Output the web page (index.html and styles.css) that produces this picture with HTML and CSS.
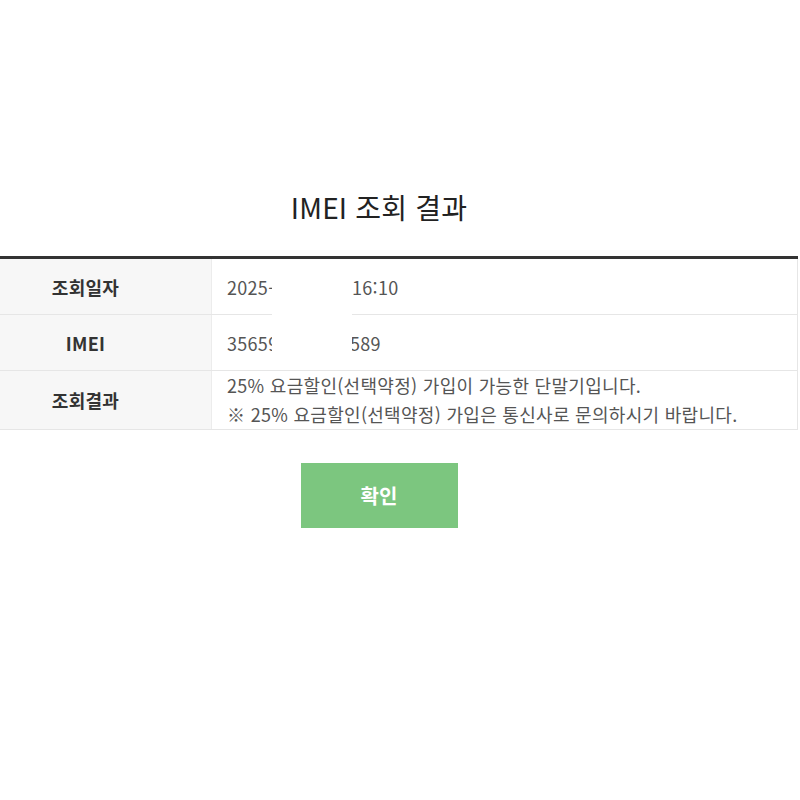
FILE: index.html
```html
<!DOCTYPE html>
<html lang="ko">
<head>
<meta charset="utf-8">
<title>IMEI 조회 결과</title>
<link rel="stylesheet" href="styles.css">
</head>
<body>
<div class="page">
  <h1 class="title">IMEI 조회 결과</h1>
  <div class="table-wrap">
    <table class="result">
      <tbody>
        <tr>
          <th>조회일자</th>
          <td><span class="part part-date">2025-05-20</span><span>16:10</span></td>
        </tr>
        <tr>
          <th>IMEI</th>
          <td><span class="part part-imei">3565912345</span><span>589</span></td>
        </tr>
        <tr class="multi">
          <th>조회결과</th>
          <td>25% 요금할인(선택약정) 가입이 가능한 단말기입니다.<br>※ 25% 요금할인(선택약정) 가입은 통신사로 문의하시기 바랍니다.</td>
        </tr>
      </tbody>
    </table>
    <div class="mask"></div>
  </div>
  <div class="actions">
    <button class="btn-ok" type="button">확인</button>
  </div>
</div>
</body>
</html>
```

FILE: styles.css
```css
html, body {
  margin: 0;
  padding: 0;
  background: #fff;
}

body {
  font-family: "Noto Sans CJK KR", "Noto Sans", sans-serif;
  color: #555;
}

.page {
  width: 838px;
  margin-left: -40px;
  padding-top: 186px;
}

.title {
  margin: 0 0 28px;
  text-align: center;
  font-size: 28px;
  line-height: 42px;
  font-weight: 400;
  letter-spacing: 0.2px;
  color: #222;
}

.table-wrap {
  position: relative;
}

.result {
  width: 100%;
  border-collapse: collapse;
  border-top: 3px solid #333;
  font-size: 18px;
  letter-spacing: 0.3px;
}

.result th,
.result td {
  height: 55px;
  padding: 0;
  border-bottom: 1px solid #e6e6e6;
  vertical-align: middle;
}

.result th {
  width: 251px;
  background: #f7f7f7;
  color: #333;
  font-weight: 700;
  text-align: center;
  border-right: 1px solid #ececec;
}

.result td {
  padding-left: 15px;
  text-align: left;
  color: #555;
  border-right: 1px solid #e6e6e6;
}

.multi td {
  line-height: 29px;
}

.part {
  display: inline-block;
  white-space: nowrap;
}

.part-date {
  width: 125px;
}

.part-imei {
  width: 123px;
}

.mask {
  position: absolute;
  left: 312px;
  top: 16px;
  width: 80px;
  height: 96px;
  background: #fff;
}

.actions {
  display: flex;
  justify-content: center;
  padding-top: 33px;
}

.btn-ok {
  width: 157px;
  height: 65px;
  border: 0;
  background: #7cc67f;
  color: #fff;
  font-family: "Noto Sans CJK KR", "Noto Sans", sans-serif;
  font-size: 20px;
  font-weight: 700;
  cursor: pointer;
}
```
